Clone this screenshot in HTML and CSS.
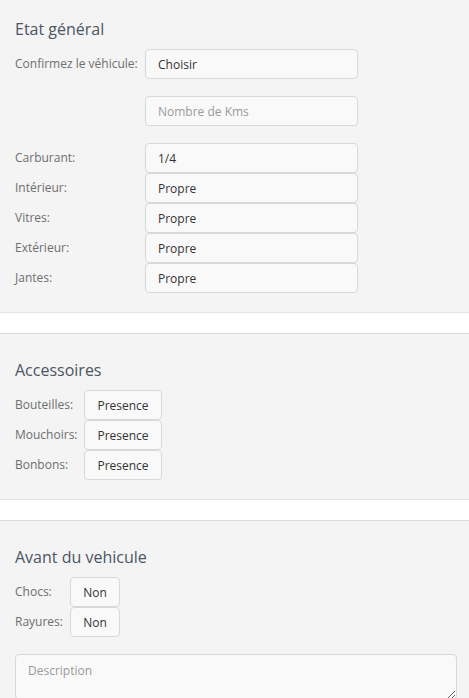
FILE: index.html
```html
<!DOCTYPE html>
<html lang="fr">
<head>
<meta charset="utf-8">
<title>Etat général</title>
<link rel="stylesheet" href="styles.css">
</head>
<body>
<div class="page">
  <section class="panel panel-etat">
    <h2 class="panel-title">Etat général</h2>
    <div class="form-grid">
      <label class="form-label spaced">Confirmez le véhicule:</label>
      <input class="form-control spaced" type="text" value="Choisir">
      <span class="form-label spaced"></span>
      <input class="form-control spaced" type="text" placeholder="Nombre de Kms">
      <label class="form-label">Carburant:</label>
      <input class="form-control" type="text" value="1/4">
      <label class="form-label">Intérieur:</label>
      <input class="form-control" type="text" value="Propre">
      <label class="form-label">Vitres:</label>
      <input class="form-control" type="text" value="Propre">
      <label class="form-label">Extérieur:</label>
      <input class="form-control" type="text" value="Propre">
      <label class="form-label">Jantes:</label>
      <input class="form-control" type="text" value="Propre">
    </div>
  </section>
  <div class="separator"></div>
  <section class="panel panel-accessoires">
    <h2 class="panel-title">Accessoires</h2>
    <div class="form-grid">
      <label class="form-label">Bouteilles:</label>
      <div><button class="toggle toggle-wide" type="button">Presence</button></div>
      <label class="form-label">Mouchoirs:</label>
      <div><button class="toggle toggle-wide" type="button">Presence</button></div>
      <label class="form-label">Bonbons:</label>
      <div><button class="toggle toggle-wide" type="button">Presence</button></div>
    </div>
  </section>
  <div class="separator"></div>
  <section class="panel panel-avant">
    <h2 class="panel-title">Avant du vehicule</h2>
    <div class="form-grid">
      <label class="form-label">Chocs:</label>
      <div><button class="toggle toggle-narrow" type="button">Non</button></div>
      <label class="form-label">Rayures:</label>
      <div><button class="toggle toggle-narrow" type="button">Non</button></div>
    </div>
    <textarea class="description" placeholder="Description"></textarea>
  </section>
</div>
</body>
</html>
```

FILE: styles.css
```css
html, body {
  margin: 0;
  padding: 0;
  overflow: hidden;
}

body {
  background: #f4f4f4;
  font-family: "Open Sans", "DejaVu Sans", sans-serif;
  font-size: 12px;
  color: #333;
}

.page {
  display: flex;
  flex-direction: column;
}

.panel {
  background: #f4f4f4;
  padding: 25px 12px 19px 15px;
}

.panel-etat {
  padding-top: 18px;
}

.panel-title {
  margin: 0 0 9px;
  font-size: 16px;
  line-height: 22px;
  font-weight: 400;
  color: #4c5563;
}

.separator {
  height: 20px;
  background: #fff;
  border-top: 1px solid #e3e3e3;
  border-bottom: 1px solid #dadada;
  box-shadow: 0 1px 2px rgba(0, 0, 0, 0.05);
}

.form-grid {
  display: grid;
  grid-template-columns: var(--label-col, 130px) auto;
  justify-content: start;
  align-items: start;
}

.panel-etat .form-grid { --label-col: 130px; }
.panel-accessoires .form-grid { --label-col: 69px; }
.panel-avant .form-grid { --label-col: 55px; }

.form-label {
  line-height: 30px;
  height: 30px;
  color: #6e6e6e;
  white-space: nowrap;
}

.spaced {
  margin-bottom: 17px;
}

.form-control {
  box-sizing: border-box;
  width: 213px;
  height: 30px;
  margin-top: 0;
  padding: 0 12px;
  border: 1px solid #d8d8d8;
  border-radius: 4px;
  background: #f9f9f9;
  font-family: inherit;
  font-size: 12px;
  color: #333;
  outline: none;
}

.form-control.spaced {
  margin-bottom: 17px;
}

.form-control::placeholder,
.description::placeholder {
  color: #9a9a9a;
}

.toggle {
  box-sizing: border-box;
  height: 30px;
  padding: 0;
  border: 1px solid #d8d8d8;
  border-radius: 4px;
  background: #f9f9f9;
  font-family: inherit;
  font-size: 12px;
  color: #333;
  display: block;
  text-align: center;
}

.toggle-wide {
  width: 78px;
}

.toggle-narrow {
  width: 50px;
}

.description {
  display: block;
  box-sizing: border-box;
  width: 100%;
  height: 46px;
  margin-top: 17px;
  padding: 7px 12px;
  border: 1px solid #d8d8d8;
  border-radius: 4px;
  background: #f9f9f9;
  font-family: inherit;
  font-size: 12px;
  color: #333;
  outline: none;
}
```
